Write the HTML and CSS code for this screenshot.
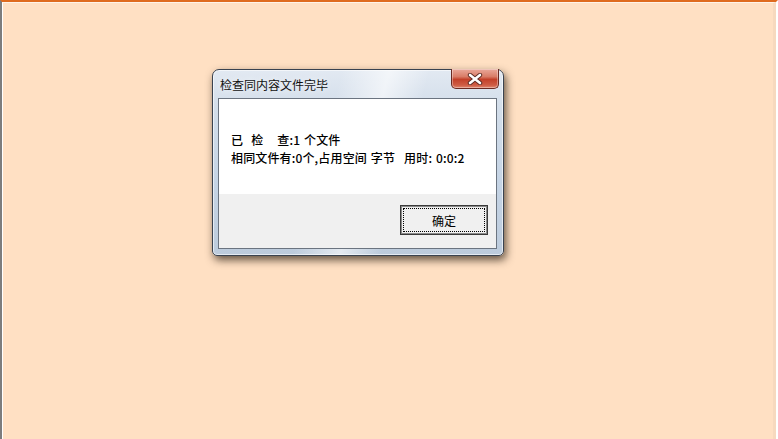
FILE: index.html
```html
<!DOCTYPE html>
<html lang="zh-CN">
<head>
<meta charset="utf-8">
<title>检查同内容文件完毕</title>
<link rel="stylesheet" href="styles.css">
</head>
<body>
<div class="desktop">
  <div class="area">
    <div class="window">
      <div class="titlebar">
        <span class="title">检查同内容文件完毕</span>
        <button class="close" aria-label="关闭">
          <svg width="16" height="12" viewBox="0 0 16 12">
            <path d="M3 2 L13 10 M13 2 L3 10" stroke="#5a2a22" stroke-width="4.4" stroke-linecap="round"/>
            <path d="M3 2 L13 10 M13 2 L3 10" stroke="#ffffff" stroke-width="2.6" stroke-linecap="round"/>
          </svg>
        </button>
      </div>
      <div class="client">
        <div class="message">
          <div class="line"><span class="g1">已</span><span class="g2">检</span>查:1 个文件</div>
          <div class="line">相同文件有:0个,占用空间 字节<span class="g3"></span>用时: 0:0:2</div>
        </div>
        <div class="footer">
          <button class="ok">确定</button>
        </div>
      </div>
    </div>
  </div>
</div>
</body>
</html>
```

FILE: styles.css
```css
html, body {
  margin: 0;
  padding: 0;
}
body {
  width: 778px;
  height: 439px;
  overflow: hidden;
  background: #ffe0c3;
  font-family: "Noto Sans CJK SC", "Noto Sans", sans-serif;
}
.desktop {
  box-sizing: border-box;
  height: 439px;
  border-top: 2px solid #df6b1e;
  border-left: 2px solid #7d7d7d;
  border-right: 2px solid #ffffff;
}
.area {
  box-sizing: border-box;
  height: 437px;
  border-top: 1px solid #fff3e8;
  border-left: 1px solid #ffffff;
  border-right: 3px solid #f7d9be;
  padding-top: 66px;
  padding-left: 209px;
}
.window {
  box-sizing: border-box;
  width: 292px;
  height: 187px;
  border: 1px solid #3a4350;
  border-radius: 7px 7px 5px 5px;
  padding: 0 6px 6px 5px;
  background:
    linear-gradient(105deg, rgba(255,255,255,0) 38%, rgba(255,255,255,0.6) 52%, rgba(255,255,255,0) 64%),
    linear-gradient(to bottom, #e2e9f2 0%, #d3deea 20%, #c5d4e5 60%, #bccbdc 100%);
  box-shadow: 2px 4px 8px rgba(30, 20, 10, 0.7), inset 0 0 0 1px rgba(255,255,255,0.6);
  display: flex;
  flex-direction: column;
}
.titlebar {
  height: 28px;
  display: flex;
  align-items: flex-start;
  justify-content: space-between;
  flex-shrink: 0;
}
.title {
  margin-top: 6px;
  margin-left: 2px;
  font-size: 12px;
  line-height: 18px;
  color: #111;
  text-shadow: 0 0 6px rgba(255,255,255,0.9);
}
.close {
  width: 48px;
  height: 20px;
  margin-top: -1px;
  margin-right: -2px;
  padding: 0;
  border: 1px solid #6a2a22;
  border-top: none;
  border-radius: 0 0 5px 5px;
  background: linear-gradient(to bottom, #eaa99a 0%, #d97d68 40%, #c3412a 55%, #cf5d45 85%, #e08870 100%);
  box-shadow: inset 0 0 0 1px rgba(255,255,255,0.35);
  display: flex;
  align-items: center;
  justify-content: center;
}
.client {
  flex: 1;
  display: flex;
  flex-direction: column;
  border: 1px solid #6b7480;
  background: #f0f0f0;
}
.message {
  height: 95px;
  box-sizing: border-box;
  background: #ffffff;
  padding: 32px 0 0 12px;
  font-family: "Noto Sans CJK SC", sans-serif;
  font-size: 12px;
  line-height: 18px;
  color: #000;
  font-weight: 500;
  word-spacing: 1px;
  letter-spacing: 0.15px;
}
.line {
  white-space: nowrap;
}
.g1 { margin-right: 8px; }
.g2 { margin-right: 14px; }
.g3 { display: inline-block; width: 9px; }
.footer {
  flex: 1;
  display: flex;
  justify-content: flex-end;
  align-items: flex-start;
  padding: 11px 8px 0 0;
}
.ok {
  position: relative;
  width: 88px;
  height: 30px;
  padding: 0;
  border: 1px solid #3a3a3a;
  box-shadow: inset 0 0 0 1px #8a8a8a;
  background: #f0f0f0;
  font-family: "Noto Sans CJK SC", sans-serif;
  font-size: 12px;
  color: #000;
}
.ok::after {
  content: "";
  position: absolute;
  inset: 2px;
  border: 1px dotted #000;
}
```
